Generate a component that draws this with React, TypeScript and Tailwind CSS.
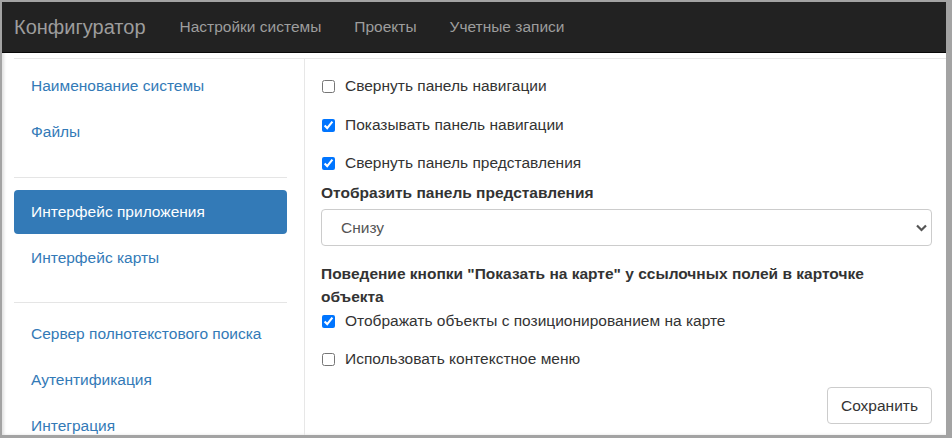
import React from 'react';

const font = { fontFamily: '"Liberation Sans", Arial, sans-serif' };

function NavItem({ label, active = false }: { label: string; active?: boolean }) {
  return (
    <a
      href="#"
      className={`flex h-[44px] items-center rounded-[4px] pl-[17px] text-[15.5px] ${
        active ? 'bg-[#337ab7] text-white' : 'text-[#337ab7]'
      }`}
    >
      {label}
    </a>
  );
}

function Check({ label, checked = false, className = '' }: { label: string; checked?: boolean; className?: string }) {
  return (
    <label className={`flex h-[22px] items-center text-[15.5px] text-[#333] ${className}`}>
      <input type="checkbox" defaultChecked={checked} className="m-0 ml-[1px] h-[13px] w-[13px]" />
      <span className="ml-[10px]">{label}</span>
    </label>
  );
}

export default function App() {
  return (
    <div style={font} className="h-[438px] w-[952px] overflow-hidden bg-[#a3a3a3] pl-[2px] pr-[6px] pt-[2px] pb-[3px]">
      <div className="flex h-full flex-col overflow-hidden bg-white shadow-[inset_2px_0_3px_rgba(0,0,0,0.12)]">
        {/* navbar */}
        <div className="flex h-[51px] shrink-0 items-center border-b border-[#080808] bg-[#222] pl-[12px]">
          <span className="text-[20px] text-[#9d9d9d]">Конфигуратор</span>
          <nav className="ml-[17px] flex text-[15.5px] text-[#9d9d9d]">
            <a href="#" className="px-[17px]">Настройки системы</a>
            <a href="#" className="px-[16px]">Проекты</a>
            <a href="#" className="px-[17px]">Учетные записи</a>
          </nav>
        </div>

        <div className="ml-[12px] mt-[5px] flex flex-1 border-t border-[#e7e7e7]">
          {/* sidebar */}
          <aside className="w-[291px] shrink-0 border-r border-[#e7e7e7] pr-[17px] pt-[5px]">
            <div className="flex flex-col gap-[2px]">
              <NavItem label="Наименование системы" />
              <NavItem label="Файлы" />
            </div>
            <div className="mb-[12px] mt-[23px] h-px bg-[#e5e5e5]" />
            <div className="flex flex-col gap-[2px]">
              <NavItem label="Интерфейс приложения" active />
              <NavItem label="Интерфейс карты" />
            </div>
            <div className="mb-[9px] mt-[22px] h-px bg-[#e5e5e5]" />
            <div className="flex flex-col gap-[2px]">
              <NavItem label="Сервер полнотекстового поиска" />
              <NavItem label="Аутентификация" />
              <NavItem label="Интеграция" />
            </div>
          </aside>

          {/* settings */}
          <main className="flex flex-1 flex-col pl-[16px] pr-[14px] pt-[16px]">
            <Check label="Свернуть панель навигации" />
            <Check label="Показывать панель навигации" checked className="mt-[17px]" />
            <Check label="Свернуть панель представления" checked className="mt-[16px]" />
            <div className="mt-[8px] text-[15.5px] font-bold leading-[22px] text-[#333]">
              Отобразить панель представления
            </div>
            <div className="relative mt-[5px]">
              <select className="h-[37px] w-full appearance-none rounded-[4px] border border-[#ccc] bg-white pl-[19px] text-[15.5px] text-[#555]">
                <option>Снизу</option>
                <option>Справа</option>
              </select>
              <svg
                className="pointer-events-none absolute right-[5px] top-[15px]"
                width="11"
                height="8"
                viewBox="0 0 11 8"
              >
                <path d="M1 1.5 5.5 6 10 1.5" fill="none" stroke="#555" strokeWidth="2.2" />
              </svg>
            </div>
            <div className="mt-[16px] max-w-[580px] text-[15.5px] font-bold leading-[23px] text-[#333]">
              Поведение кнопки "Показать на карте" у ссылочных полей в карточке объекта
            </div>
            <Check label="Отображать объекты с позиционированием на карте" checked className="mt-[2px]" />
            <Check label="Использовать контекстное меню" className="mt-[16px]" />
            <div className="mt-[17px] flex justify-end">
              <button className="h-[37px] w-[105px] rounded-[4px] border border-[#ccc] bg-white text-[15.5px] text-[#333]">
                Сохранить
              </button>
            </div>
          </main>
        </div>
      </div>
    </div>
  );
}
